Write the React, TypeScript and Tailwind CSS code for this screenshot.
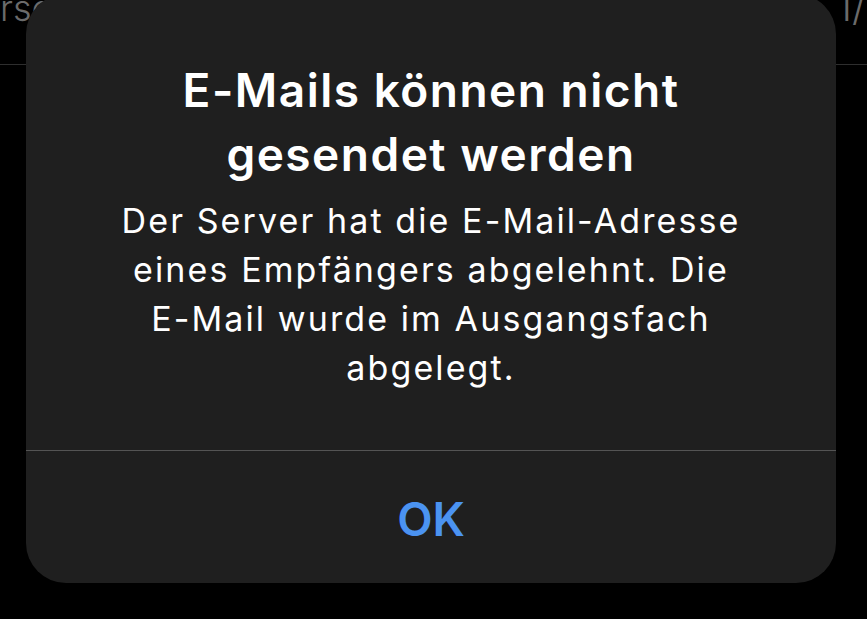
import React from 'react';

const App = () => {
    return (
        <div className="relative w-[867px] h-[619px] overflow-hidden bg-black" style={{ fontFamily: 'Inter, "Noto Sans", sans-serif' }}>
            {/* BACKGROUND HEADER */}
            <div className="flex justify-between items-end h-[65px] border-b border-[#2e2e2e] overflow-hidden">
                <span className="text-[36px] leading-none font-light text-[#6b6b6b] -mt-[10px] mb-[38px] whitespace-nowrap">rsendet</span>
                <span className="text-[40px] leading-none font-light text-[#6b6b6b] mb-[37px] mr-[1px] whitespace-nowrap">1/</span>
            </div>

            {/* ALERT START */}
            <div className="absolute left-[26px] top-[-6px] w-[810px] h-[589px] rounded-[40px] bg-[#1f1f1f] flex flex-col">
                <div className="h-[456px] flex flex-col items-center pt-[64px] px-6 text-center">
                    <h1 className="text-white font-semibold text-[46px] leading-[64px] tracking-[1.5px] whitespace-nowrap">
                        E-Mails können nicht<br />gesendet werden
                    </h1>
                    <p className="text-white text-[34px] leading-[49px] tracking-[2.1px] mt-[10px] whitespace-nowrap">
                        Der Server hat die E-Mail-Adresse<br />
                        eines Empfängers abgelehnt. Die<br />
                        E-Mail wurde im Ausgangsfach<br />
                        abgelegt.
                    </p>
                </div>
                <div className="border-t border-[#545454] flex-1 flex items-center justify-center">
                    <span className="text-[#4b93f1] font-semibold text-[46px] leading-none mt-[4px]">OK</span>
                </div>
            </div>
            {/* ALERT END */}
        </div>
    );
};

export default App;
